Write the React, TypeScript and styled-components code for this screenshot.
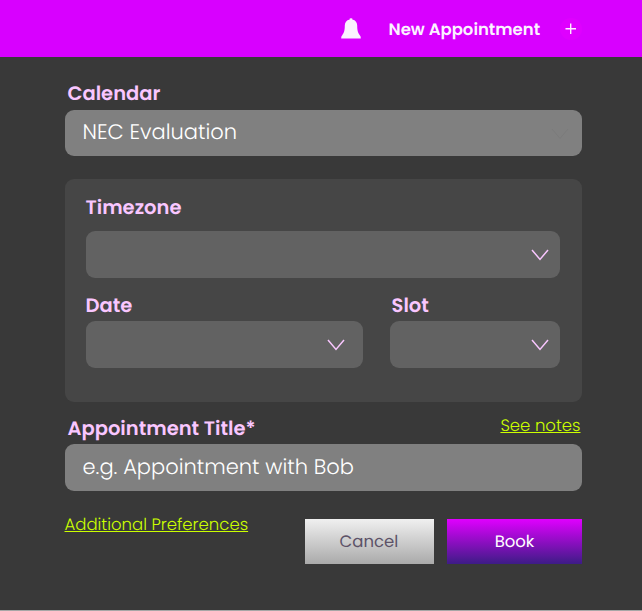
import React from "react";
import styled, { createGlobalStyle } from "styled-components";

const GlobalStyle = createGlobalStyle`
  *, *::before, *::after { box-sizing: border-box; }
  html { background: #a6a6a6; }
  body {
    margin: 0;
    overflow: hidden;
    font-family: Poppins, Inter, "Open Sans", sans-serif;
    text-rendering: geometricPrecision;
  }
  button, input { font: inherit; text-rendering: inherit; border: 0; padding: 0; margin: 0; }
`;

const Page = styled.div`
  height: 610px;
  background: #393939;
`;

const Header = styled.header`
  display: flex;
  align-items: center;
  height: 57px;
  padding-left: 341px;
  background: #d800ff;
  color: #fbf2ff;
`;

const BellIcon = styled.svg`
  flex: none;
  width: 20px;
  height: 22px;
`;

const NewAppointment = styled.button`
  width: 152px;
  margin-left: 27.5px;
  margin-top: 2px;
  background: none;
  color: inherit;
  font-size: 16.5px;
  font-weight: 600;
  line-height: 24px;
  text-align: left;
  white-space: nowrap;
`;

const AddButton = styled.button`
  display: flex;
  width: 22px;
  height: 22px;
  margin-left: 19.5px;
  margin-top: 1px;
  border-radius: 50%;
  background: #df00ff;
`;

const Form = styled.form`
  display: flex;
  flex-direction: column;
  width: 517.5px;
  margin-left: 64.5px;
  padding-top: 25px;
`;

const Label = styled.label<{ $indent?: number; $drop?: number }>`
  display: block;
  height: 24px;
  margin-top: ${(p) => p.$drop ?? 0}px;
  margin-left: ${(p) => p.$indent ?? 0}px;
  color: #f9c6ff;
  font-size: 19.5px;
  font-weight: 600;
  line-height: 24px;
  white-space: nowrap;
`;

const SelectField = styled.button<{ $tone: "light" | "dark"; $end?: number }>`
  display: flex;
  align-items: center;
  justify-content: space-between;
  width: 100%;
  height: 46.5px;
  padding: 0 ${(p) => p.$end ?? 11}px 0 18px;
  border-radius: 9px;
  background: ${(p) => (p.$tone === "light" ? "#808080" : "#626262")};
  color: ${(p) => (p.$tone === "light" ? "#7b7b7b" : "#f9c6ff")};
`;

const Value = styled.span`
  margin-top: 1px;
  color: #fff;
  font-size: 21px;
  font-weight: 300;
  line-height: 26px;
`;

const TextInput = styled.input`
  width: 100%;
  height: 46.5px;
  padding: 0 18px;
  border-radius: 9px;
  background: #808080;
  color: #fff;
  font-size: 21px;
  font-weight: 300;
  &::placeholder { color: #fff; opacity: 1; }
`;

const Panel = styled.section`
  height: 223.5px;
  margin-top: 22.5px;
  padding: 17px 22.5px 0 21px;
  border-radius: 9px;
  background: #464646;
`;

const PanelRow = styled.div`
  display: grid;
  grid-template-columns: 277.5px 169.5px;
  column-gap: 27px;
  margin-top: 16px;
`;

const FieldGroup = styled.div<{ $gap?: number }>`
  display: grid;
  row-gap: ${(p) => p.$gap ?? 3.5}px;
`;

const TitleRow = styled.div`
  display: flex;
  justify-content: space-between;
  height: 28px;
  margin-top: 14px;
  padding: 0 1.5px 0 3px;
`;

const TextLink = styled.a<{ $raise: number }>`
  height: 22px;
  margin-top: ${(p) => -p.$raise}px;
  color: #ccff00;
  font-size: 16.5px;
  font-weight: 300;
  line-height: 22px;
  white-space: nowrap;
  text-decoration: underline;
  text-decoration-thickness: 1px;
  text-underline-offset: 1px;
  text-decoration-skip-ink: none;
`;

const Footer = styled.div`
  display: flex;
  justify-content: space-between;
  margin-top: 28.5px;
`;

const Actions = styled.div`
  display: flex;
  gap: 13.5px;
`;

const ActionButton = styled.button<{ $primary?: boolean }>`
  width: ${(p) => (p.$primary ? 135 : 129)}px;
  height: 45px;
  background: ${(p) =>
    p.$primary ? "linear-gradient(#e000ff, #3d1c86)" : "linear-gradient(#f0f0f0, #aaaaaa)"};
  color: ${(p) => (p.$primary ? "#fff" : "#5d5368")};
  font-size: 16.5px;
`;

const ChevronSvg = styled.svg`
  flex: none;
  width: 18px;
  height: 12px;
  margin-top: 2px;
`;

const Chevron = ({ faint = false }: { faint?: boolean }) => (
  <ChevronSvg viewBox="0 0 18 12" fill="none" stroke="currentColor" strokeWidth={faint ? 1 : 1.5}>
    <path d="M1 1 9 10.400 17 1" />
  </ChevronSvg>
);

export default function App() {
  return (
    <>
      <GlobalStyle />
      <Page>
        <Header>
          <BellIcon viewBox="0 0 20 22" fill="currentColor">
            <path d="M8.7 1.4V.5Q10 0 11.3.5v.9C14.7 2 16.2 4.500 16.2 7.600c0 5 .7 7.300 2.400 9.300.8.9 1.200 1.500 1.200 3.700H.2c0-2.200.4-2.800 1.200-3.700 1.700-2 2.400-4.300 2.400-9.300 0-3.100 1.500-5.600 4.900-6.200Z" />
          </BellIcon>
          <NewAppointment type="button">New Appointment</NewAppointment>
          <AddButton type="button" aria-label="Add">
            <svg width="22" height="22" viewBox="0 0 22 22" stroke="#fdeaff" strokeWidth="1.4">
              <path d="M10.700 5.500v10.500M5.500 10.700h10.500" />
            </svg>
          </AddButton>
        </Header>
        <Form>
          <FieldGroup>
            <Label $indent={3}>Calendar</Label>
            <SelectField type="button" $tone="light" $end={13}>
              <Value>NEC Evaluation</Value>
              <Chevron faint />
            </SelectField>
          </FieldGroup>
          <Panel>
            <FieldGroup $gap={11.5}>
              <Label>Timezone</Label>
              <SelectField type="button" $tone="dark"><span /><Chevron /></SelectField>
            </FieldGroup>
            <PanelRow>
              <FieldGroup>
                <Label>Date</Label>
                <SelectField type="button" $tone="dark" $end={18}><span /><Chevron /></SelectField>
              </FieldGroup>
              <FieldGroup>
                <Label $indent={1.5}>Slot</Label>
                <SelectField type="button" $tone="dark"><span /><Chevron /></SelectField>
              </FieldGroup>
            </PanelRow>
          </Panel>
          <TitleRow>
            <Label htmlFor="title" $drop={1}>Appointment Title*</Label>
            <TextLink $raise={1}>See notes</TextLink>
          </TitleRow>
          <TextInput id="title" placeholder="e.g. Appointment with Bob" />
          <Footer>
            <TextLink $raise={5.5}>Additional Preferences</TextLink>
            <Actions>
              <ActionButton type="button">Cancel</ActionButton>
              <ActionButton type="button" $primary>Book</ActionButton>
            </Actions>
          </Footer>
        </Form>
      </Page>
    </>
  );
}
